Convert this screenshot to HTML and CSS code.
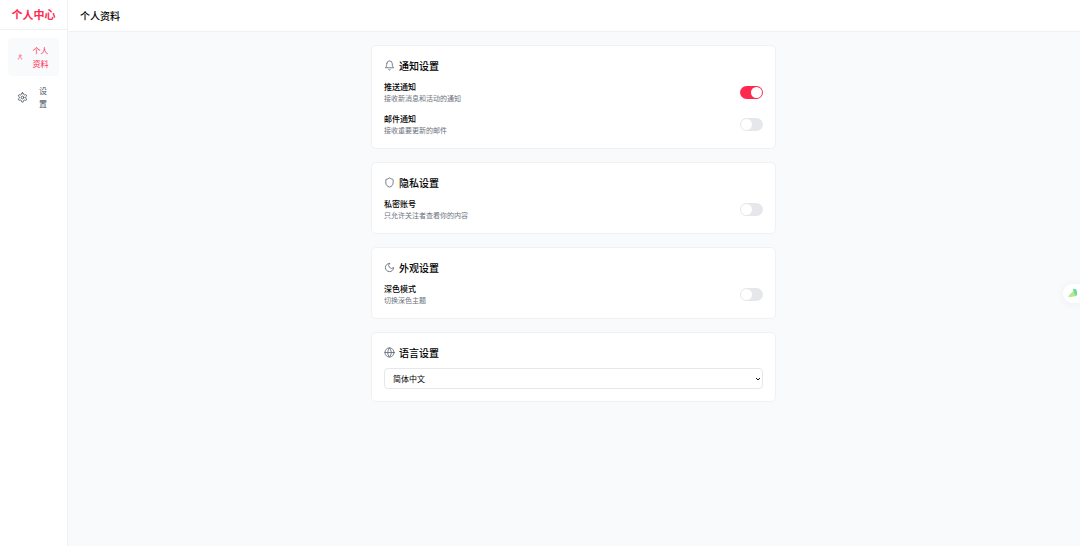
FILE: index.html
```html
<!DOCTYPE html>
<html lang="zh-CN">
<head>
<meta charset="utf-8">
<meta name="viewport" content="width=device-width, initial-scale=1">
<title>个人中心</title>
<link rel="stylesheet" href="styles.css">
</head>
<body>
<div class="app">
  <aside class="sidebar">
    <h1 class="brand">个人中心</h1>
    <nav class="nav">
      <button type="button" class="nav-item active">
        <svg class="icon icon-small" viewBox="0 0 24 24"><path d="M19 21v-2a4 4 0 0 0-4-4H9a4 4 0 0 0-4 4v2"/><circle cx="12" cy="7" r="4"/></svg>
        <span class="nav-label">个人资料</span>
      </button>
      <button type="button" class="nav-item">
        <svg class="icon" viewBox="0 0 24 24"><path d="M12.220 2h-.44a2 2 0 0 0-2 2v.18a2 2 0 0 1-1 1.730l-.43.25a2 2 0 0 1-2 0l-.15-.08a2 2 0 0 0-2.730.73l-.22.38a2 2 0 0 0 .73 2.730l.15.1a2 2 0 0 1 1 1.720v.51a2 2 0 0 1-1 1.740l-.15.09a2 2 0 0 0-.73 2.730l.22.38a2 2 0 0 0 2.730.73l.15-.08a2 2 0 0 1 2 0l.43.25a2 2 0 0 1 1 1.730V20a2 2 0 0 0 2 2h.44a2 2 0 0 0 2-2v-.18a2 2 0 0 1 1-1.730l.43-.25a2 2 0 0 1 2 0l.15.08a2 2 0 0 0 2.730-.73l.22-.39a2 2 0 0 0-.73-2.730l-.15-.08a2 2 0 0 1-1-1.740v-.5a2 2 0 0 1 1-1.740l.15-.09a2 2 0 0 0 .73-2.730l-.22-.38a2 2 0 0 0-2.730-.73l-.15.08a2 2 0 0 1-2 0l-.43-.25a2 2 0 0 1-1-1.730V4a2 2 0 0 0-2-2z"/><circle cx="12" cy="12" r="3"/></svg>
        <span class="nav-label">设置</span>
      </button>
    </nav>
  </aside>

  <div class="page">
    <header class="topbar"><h2 class="topbar-title">个人资料</h2></header>
    <main class="content">
      <section class="card">
        <h3 class="card-title">
          <svg class="icon" viewBox="0 0 24 24"><path d="M6 8a6 6 0 0 1 12 0c0 7 3 9 3 9H3s3-2 3-9"/><path d="M10.3 21a1.94 1.94 0 0 0 3.4 0"/></svg>
          通知设置
        </h3>
        <div class="rows">
          <div class="row">
            <label class="row-text" for="push"><span class="row-name">推送通知</span><span class="row-hint">接收新消息和活动的通知</span></label>
            <input class="switch" type="checkbox" role="switch" id="push" checked>
          </div>
          <div class="row">
            <label class="row-text" for="mail"><span class="row-name">邮件通知</span><span class="row-hint">接收重要更新的邮件</span></label>
            <input class="switch" type="checkbox" role="switch" id="mail">
          </div>
        </div>
      </section>

      <section class="card">
        <h3 class="card-title">
          <svg class="icon" viewBox="0 0 24 24"><path d="M20 13c0 5-3.5 7.5-7.66 8.95a1 1 0 0 1-.67-.01C7.5 20.5 4 18 4 13V6a1 1 0 0 1 1-1c2 0 4.500-1.200 6.240-2.720a1.170 1.170 0 0 1 1.520 0C14.500 3.810 17 5 19 5a1 1 0 0 1 1 1z"/></svg>
          隐私设置
        </h3>
        <div class="row">
          <label class="row-text" for="private"><span class="row-name">私密账号</span><span class="row-hint">只允许关注者查看你的内容</span></label>
          <input class="switch" type="checkbox" role="switch" id="private">
        </div>
      </section>

      <section class="card">
        <h3 class="card-title">
          <svg class="icon" viewBox="0 0 24 24"><path d="M12 3a6 6 0 0 0 9 9 9 9 0 1 1-9-9z"/></svg>
          外观设置
        </h3>
        <div class="row">
          <label class="row-text" for="dark"><span class="row-name">深色模式</span><span class="row-hint">切换深色主题</span></label>
          <input class="switch" type="checkbox" role="switch" id="dark">
        </div>
      </section>

      <section class="card">
        <h3 class="card-title" id="language-title">
          <svg class="icon" viewBox="0 0 24 24"><circle cx="12" cy="12" r="10"/><path d="M12 2a14.500 14.500 0 0 0 0 20 14.500 14.500 0 0 0 0-20"/><path d="M2 12h20"/></svg>
          语言设置
        </h3>
        <div class="select-wrap">
          <select class="select" aria-labelledby="language-title"><option>简体中文</option></select>
          <svg class="chevron" viewBox="0 0 6 4"><path d="M1 1l2 2 2-2"/></svg>
        </div>
      </section>
    </main>
  </div>
</div>

<button type="button" class="assistant" aria-label="助手">
  <svg class="assistant-logo" viewBox="0 0 10 10"><path d="M5 1Q8 0 9 3V7Q8 8.500 6 8z" fill="#6edca0"/><path d="M0 8.500L5 3Q6 6 8 7Q5 10 0 8.500z" fill="#b9e986"/></svg>
</button>
</body>
</html>
```
FILE: styles.css
```css
* { box-sizing: border-box; }

body {
  margin: 0;
  background: #f9fafb;
  color: #000;
  font-family: "Noto Sans CJK SC", sans-serif;
  font-size: 8px;
}

h1, h2, h3 { margin: 0; }

button, select { font: inherit; }

.app { display: flex; min-height: 100vh; }

.sidebar {
  flex: 0 0 68px;
  background: #fff;
  border-right: 1px solid #f0f1f3;
}

.brand {
  padding: 6px 0 7px;
  border-bottom: 1px solid #f0f1f3;
  color: #ff2950;
  font-size: 11px;
  font-weight: 700;
  line-height: 16px;
  text-align: center;
}

.nav {
  display: flex;
  flex-direction: column;
  gap: 2px;
  padding: 8px;
}

.nav-item {
  display: flex;
  align-items: center;
  gap: 8px;
  width: 100%;
  padding: 6px 9px;
  border: 0;
  border-radius: 4px;
  background: none;
  color: #4b5563;
  line-height: 13px;
}

.nav-item.active { background: #f9fafb; color: #ff2950; }

.nav-label { flex: 1; min-width: 0; text-align: center; }

.icon {
  flex: none;
  width: 11px;
  height: 11px;
  fill: none;
  stroke: currentColor;
  stroke-width: 2;
  stroke-linecap: round;
  stroke-linejoin: round;
}

.icon-small { width: 6px; height: 6px; }

.page { flex: 1; min-width: 0; }

.topbar {
  padding: 8px 12px 7px;
  background: #fff;
  border-bottom: 1px solid #f0f1f3;
}

.topbar-title { font-size: 10px; font-weight: 500; line-height: 16px; }

.content {
  display: flex;
  flex-direction: column;
  gap: 13px;
  max-width: 432px;
  margin: 0 auto;
  padding: 13px 14px 13px 13px;
}

.card {
  padding: 12px;
  background: #fff;
  border: 1px solid #f0f1f3;
  border-radius: 5px;
}

.card-title {
  display: flex;
  align-items: center;
  gap: 4px;
  margin-bottom: 8px;
  font-size: 10px;
  font-weight: 500;
  line-height: 15px;
}

.card-title .icon { color: #6b7280; }

.rows { display: flex; flex-direction: column; gap: 9px; }

.row { display: flex; align-items: center; justify-content: space-between; }

.row-text { display: flex; flex-direction: column; }

.row-name { font-weight: 500; line-height: 12px; }

.row-hint { color: #6b7280; font-size: 7px; line-height: 11px; }

.switch {
  appearance: none;
  display: flex;
  width: 23px;
  height: 13px;
  margin: 0;
  padding: 1px;
  border-radius: 7px;
  background: #e5e7eb;
}

.switch::before {
  content: "";
  width: 11px;
  height: 11px;
  border-radius: 50%;
  background: #fff;
}

.switch:checked { justify-content: flex-end; background: #ff2950; }

.select-wrap { display: grid; align-items: center; }

.select-wrap > * { grid-area: 1 / 1; }

.select {
  appearance: none;
  width: 100%;
  height: 21px;
  padding: 0 8px;
  border: 1px solid #e5e7eb;
  border-radius: 4px;
  background: #fff;
  color: #000;
}

.chevron {
  justify-self: end;
  width: 6px;
  height: 4px;
  margin-right: 2px;
  fill: none;
  stroke: #111;
  pointer-events: none;
}

.assistant {
  position: fixed;
  top: 52%;
  right: 0;
  display: flex;
  align-items: center;
  width: 17px;
  height: 19px;
  padding: 0 5px;
  border: 0;
  border-radius: 10px 0 0 10px;
  background: #fff;
  box-shadow: 0 1px 10px rgb(0 0 0 / 6%);
}

.assistant-logo { flex: none; width: 10px; height: 10px; }
```
